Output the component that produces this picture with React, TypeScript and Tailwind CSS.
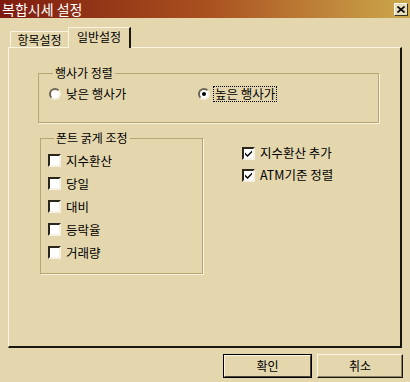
import React, { useState } from "react";

const FONT = "font-['Noto_Sans_CJK_KR','Noto_Sans',sans-serif]";

function Radio({ checked }: { checked: boolean }) {
  return (
    <span className="w-[12px] h-[12px] rounded-full bg-white border-2 border-t-[#6b6552] border-l-[#6b6552] border-r-[#f4eedc] border-b-[#f4eedc] flex items-center justify-center shrink-0">
      {checked && <span className="w-[4px] h-[4px] rounded-full bg-black" />}
    </span>
  );
}

function Check({ checked }: { checked: boolean }) {
  return (
    <span className="w-[13px] h-[13px] bg-white border-2 border-t-[#2a261c] border-l-[#2a261c] border-r-[#f6f1e2] border-b-[#f6f1e2] flex items-center justify-center shrink-0">
      {checked && (
        <svg width="9" height="9" viewBox="0 0 9 9">
          <path d="M1 3.5 L3.5 6 L8 1.5 L8 3.5 L3.5 8 L1 5.5 Z" fill="#000" />
        </svg>
      )}
    </span>
  );
}

export default function App() {
  const [sortHigh, setSortHigh] = useState(true);
  const [bold, setBold] = useState<string[]>([]);
  const [extra, setExtra] = useState<string[]>(["지수환산 추가", "ATM기준 정렬"]);

  const toggle = (list: string[], set: (v: string[]) => void, v: string) =>
    set(list.includes(v) ? list.filter((x) => x !== v) : [...list, v]);

  return (
    <div className={`w-[410px] h-[382px] bg-[#e4d7ae] flex flex-col text-[12px] leading-[14px] text-black ${FONT}`}>
      {/* Title bar */}
      <div className="h-[18px] flex items-center justify-between pl-[2px] pr-[2px] bg-gradient-to-r from-[#7e1a0f] via-[#a9501f] to-[#cba84c]">
        <span className="text-white text-[14px] leading-[16px]">복합시세 설정</span>
        <button className="w-[14px] h-[13px] bg-[#e8ddbb] border border-t-[#fffbee] border-l-[#fffbee] border-r-[#3a3426] border-b-[#3a3426] flex items-center justify-center">
          <svg width="8" height="7" viewBox="0 0 8 7">
            <path d="M0.5 0.5 L7.5 6.5 M7.5 0.5 L0.5 6.5" stroke="#000" strokeWidth="1.6" />
          </svg>
        </button>
      </div>

      {/* Tabs */}
      <div className="mt-[9px] h-[20px] flex items-end pl-[10px] relative z-10">
        <div className="w-[58px] h-[16px] border-t border-l border-[#fbf5e2] flex items-center justify-center">
          항목설정
        </div>
        <div className="w-[63px] h-[21px] -mb-[1px] bg-[#e4d7ae] border-t border-l border-[#fbf5e2] border-r-2 border-r-[#1a1710] flex items-start justify-center pt-[2px]">
          일반설정
        </div>
      </div>

      {/* Panel */}
      <div className="mx-[8px] h-[301px] border-t border-l border-[#fbf5e2] border-r-2 border-b-2 border-r-[#1a1710] border-b-[#1a1710] flex flex-col">
        <fieldset className="ml-[29px] mt-[18px] w-[341px] h-[57px] border border-[#b6a673] shadow-[1px_1px_0_#f8f2de] px-[10px]">
          <legend className="ml-[4px] px-[2px]">행사가 정렬</legend>
          <div className="flex items-center pt-[6px]">
            <label className="flex items-center gap-[5px] w-[149px] cursor-pointer" onClick={() => setSortHigh(false)}>
              <Radio checked={!sortHigh} />
              <span className="text-[12.5px]">낮은 행사가</span>
            </label>
            <label className="flex items-center gap-[3px] cursor-pointer" onClick={() => setSortHigh(true)}>
              <Radio checked={sortHigh} />
              <span className="text-[12.5px] border border-dotted border-black px-[1px]">높은 행사가</span>
            </label>
          </div>
        </fieldset>

        <div className="flex mt-[8px]">
          <fieldset className="ml-[31px] w-[163px] h-[143px] border border-[#b6a673] shadow-[1px_1px_0_#f8f2de] pl-[7px]">
            <legend className="ml-[6px] px-[2px]">폰트 굵게 조정</legend>
            <div className="flex flex-col pt-[4px]">
              {["지수환산", "당일", "대비", "등락율", "거래량"].map((item) => (
                <label
                  key={item}
                  className="h-[23px] flex items-center gap-[5px] cursor-pointer"
                  onClick={() => toggle(bold, setBold, item)}
                >
                  <Check checked={bold.includes(item)} />
                  <span className="text-[12.5px]">{item}</span>
                </label>
              ))}
            </div>
          </fieldset>

          <div className="ml-[39px] mt-[11px] flex flex-col">
            {["지수환산 추가", "ATM기준 정렬"].map((item) => (
              <label
                key={item}
                className="h-[22px] flex items-center gap-[5px] cursor-pointer"
                onClick={() => toggle(extra, setExtra, item)}
              >
                <Check checked={extra.includes(item)} />
                <span className="text-[12.5px]">{item}</span>
              </label>
            ))}
          </div>
        </div>
      </div>

      {/* Buttons */}
      <div className="flex justify-end gap-[5px] pr-[7px] mt-[6px]">
        <button className="w-[89px] h-[24px] border border-black flex">
          <span className="flex-1 flex items-center justify-center border border-t-[#fbf5e2] border-l-[#fbf5e2] border-r-[#4a4434] border-b-[#4a4434]">
            확인
          </span>
        </button>
        <button className="w-[86px] h-[24px] flex items-center justify-center border border-t-[#fbf5e2] border-l-[#fbf5e2] border-r-[#1a1710] border-b-[#1a1710] shadow-[inset_-1px_-1px_0_#8a8166]">
          취소
        </button>
      </div>
    </div>
  );
}
